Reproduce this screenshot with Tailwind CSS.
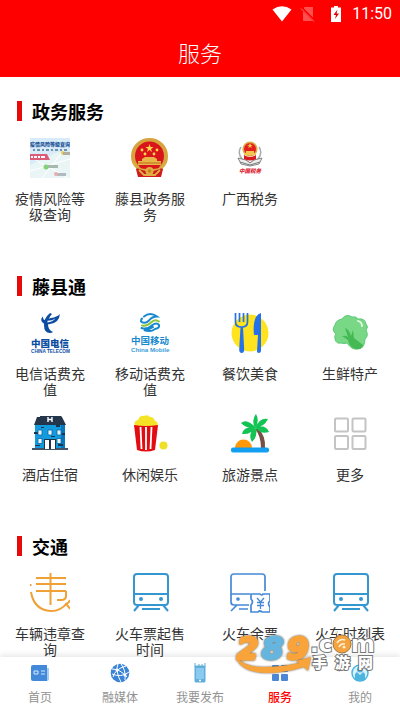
<!DOCTYPE html>
<html lang="zh-CN">
<head>
    <meta charset="UTF-8">
    <meta name="viewport" content="width=device-width, initial-scale=1.0">
    <title>服务</title>
    <script src="https://cdn.jsdelivr.net/npm/@tailwindcss/browser@4"></script>
</head>
<body class="bg-white font-['Noto_Sans_CJK_SC',sans-serif]">
<div class="relative flex flex-col h-screen">
    <!-- Header -->
    <header class="bg-[#fe0000] text-white">
        <div class="flex items-center justify-end h-7 pr-2 gap-2">
            <svg class="w-5 h-4" viewBox="0 0 20 16" fill="#fff"><path d="M.5 3.5Q10-3 19.500 3.500L10 15.500z"/></svg>
            <svg class="w-4 h-4" viewBox="0 0 16 16"><path d="M4.500 1H13v14H3V5z" fill="#ff5050"/><path d="M1 1.500L15 15.500" stroke="#fe0000" stroke-width="2.500"/><path d="M1 2.500L14 15.500" stroke="#ff6a6a"/></svg>
            <svg class="w-4 h-4 ml-1" viewBox="0 0 16 16"><path d="M4 1.500h2V0h4v1.500h3V16H3V1.500z" fill="#fff"/><path d="M9.500 3.500L5.500 9H8l-1 4 4-5.500H8.500z" fill="#d00"/></svg>
            <span class="font-[Roboto,sans-serif] text-base leading-7">11:50</span>
        </div>
        <h1 class="text-center text-[22px] leading-[49px] font-light">服务</h1>
    </header>

    <!-- Services -->
    <main class="flex-1 min-h-0 overflow-y-auto [scrollbar-width:none] text-sm leading-4 text-[#333] text-center pt-6">
        <section class="mb-[54px]">
            <h2 class="flex items-center gap-[10px] h-5 pl-[17px] mb-[17px] text-lg leading-5 font-bold text-black"><span class="w-[5px] h-5 bg-[#e60a0a]"></span>政务服务</h2>
            <div class="grid grid-cols-4">
                <a href="#" class="flex flex-col items-center gap-3 px-3">
                    <svg class="w-10 h-10" viewBox="0 0 40 40">
                        <path d="M0 0h40v40H0z" fill="#d7ebf8"/>
                        <path d="M0 27L28 14 40 16V40H0z" fill="#eaf5f5"/>
                        <path d="M0 33L40 21M12 40L34 12M2 20L38 40" stroke="#fff"/>
                        <text x="0" y="8" font-size="5" font-weight="900" fill="#1f5697">疫情风险等级查询</text>
                        <path d="M3 12h2M7 12h3M12 12h2M16 12h3M21 12h2M25 12h3M30 12h2M34 12h3" stroke="#6f93ad" stroke-width="2"/>
                        <path d="M0 16h17l3 6H0z" fill="#dc5b77"/>
                        <path d="M1 19h2M4 19h3M8 19h2M11 19h4" stroke="#fff" stroke-width="2"/>
                        <circle cx="33" cy="15" r="2" fill="#eed44c"/><path d="M33 14h7v3h-7z" fill="#b1ae9d"/>
                        <circle cx="16" cy="29" r="2.500" fill="#83d27b"/><path d="M18 27h10v3H18z" fill="#a5b9ac"/>
                        <circle cx="26" cy="36" r="2" fill="#f3a8a9"/><path d="M27 35h9v3h-9z" fill="#b2bac1"/>
                    </svg>
                    <span>疫情风险等级查询</span>
                </a>
                <a href="#" class="flex flex-col items-center gap-3 px-3">
                    <svg class="w-10 h-10" viewBox="0 0 40 40">
                        <path d="M6 30Q1 26 1 18a18.500 18 0 0 1 37 0q0 8-5 12l-2 8H8z" fill="#d6a43c"/>
                        <path d="M6 31l7-3h13l7 3-2 8H8z" fill="#cf1b1d"/>
                        <circle cx="19.500" cy="18" r="14.500" fill="#d9151b"/>
                        <path d="M19.500 6l1 3h3l-2.500 2 1 3-2.500-2-2.500 2 1-3-2.500-2h3z" fill="#ffd94c"/>
                        <g fill="#ffd94c"><circle cx="12" cy="12" r="1.400"/><circle cx="27" cy="12" r="1.400"/><circle cx="15" cy="16" r="1.400"/><circle cx="24" cy="16" r="1.400"/></g>
                        <path d="M12 21l3-2h9l3 2v2h4v4H8v-4h4z" fill="#e9b546"/>
                        <path d="M8 25h23" stroke="#bb6a20"/>
                        <path d="M3 24Q6 31 16 32h7q10-1 13-8M9 32l5 5h11l5-5" fill="none" stroke="#dfad43" stroke-width="1.800"/>
                        <circle cx="19.500" cy="33" r="4" fill="#e2ad42"/><circle cx="19.500" cy="33" r="1.800" fill="#c98020"/>
                    </svg>
                    <span>藤县政务服务</span>
                </a>
                <a href="#" class="flex flex-col items-center gap-3 px-3">
                    <svg class="w-10 h-10" viewBox="0 0 40 40">
                        <path d="M11 9Q7 15 12 21l8 4 8-4q5-6 1-12" fill="none" stroke="#aaa" stroke-width="1.500"/>
                        <path d="M8 20l8 2 4 3 4-3 8-2-3 6-9 2-9-2z" fill="#eee" stroke="#777" stroke-width=".9"/>
                        <path d="M10 24l10 3 10-3" fill="none" stroke="#777"/>
                        <circle cx="20" cy="11" r="7.600" fill="#d9ad47"/><circle cx="20" cy="11" r="6" fill="#e41d1d"/>
                        <path d="M20 5l1 2h2l-2 1 1 2-2-1-2 1 1-2-2-1h2zM16 13h8v2h2v2H14v-2h2z" fill="#f1c751"/>
                        <path d="M14 17q6 4 12 0v4q-6 3-12 0z" fill="#d71920"/>
                        <text x="9" y="35" font-size="5.500" font-weight="900" font-style="italic" fill="#dd2836">中国税务</text>
                    </svg>
                    <span>广西税务</span>
                </a>
            </div>
        </section>

        <section class="mb-[54px]">
            <h2 class="flex items-center gap-[10px] h-5 pl-[17px] mb-[17px] text-lg leading-5 font-bold text-black"><span class="w-[5px] h-5 bg-[#e60a0a]"></span>藤县通</h2>
            <div class="grid grid-cols-4 gap-y-[17px]">
                <a href="#" class="flex flex-col items-center gap-3 px-3">
                    <svg class="w-10 h-10 overflow-visible" viewBox="0 0 40 40" fill="#0c4da2">
                        <path d="M13 3.500Q10 6 12 9q2 3 8 2 9-1 10-10-3 3-9 4-4 1-6 2-2 0-2-3.500z"/>
                        <path d="M20 0q-6 5-6 12 0 8 6 8 2 0 3-1-5-2-5-8 0-6 4-10z"/>
                        <path d="M17.500 7.800q5 0 8-2.300-3 3.500-8 4z" fill="#fff"/>
                        <text x="1" y="34" font-size="9.500" font-weight="900">中国电信</text>
                        <text x="1" y="40" font-family="Liberation Sans, sans-serif" font-size="4.700" font-weight="bold">CHINA TELECOM</text>
                    </svg>
                    <span>电信话费充值</span>
                </a>
                <a href="#" class="flex flex-col items-center gap-3 px-3">
                    <svg class="w-10 h-10 overflow-visible" viewBox="0 0 40 40">
                        <g fill="none" stroke-width="2" stroke-linecap="round">
                            <path d="M14 3.500q6-5 13 0-5 0-8 4-4 4-8 1 0-2 1-3" stroke="#1788ce"/>
                            <path d="M12 12.500q5 1 9-3 4-4 8-1" stroke="#8cc43d"/>
                            <path d="M11.500 15q6 2 11-3 4-3 6.500 0 1 3-4 4-3 2-5 2-4 0-6-1 5 0 9-3" stroke="#1788ce"/>
                        </g>
                        <text x="1" y="31" font-size="9.500" font-weight="bold" fill="#1788ce">中国移动</text>
                        <text x="1" y="38.500" font-family="Liberation Sans, sans-serif" font-size="6.200" font-weight="bold" fill="#3b9dd7">China Mobile</text>
                    </svg>
                    <span>移动话费充值</span>
                </a>
                <a href="#" class="flex flex-col items-center gap-3 px-3">
                    <svg class="w-10 h-10" viewBox="0 0 40 40">
                        <circle cx="20" cy="20" r="18.500" fill="#ffe31f"/>
                        <path d="M5.500 0v9q0 5 6 5t6-5V0M9.500 0v9M13.500 0v9" fill="none" stroke="#2471e9" stroke-width="1.700"/>
                        <path d="M10.500 14h2.500l1.200 23q-.2 3-2.500 3t-2.500-3z" fill="#2471e9"/>
                        <path d="M31 0v38q-.3 2-2.200 2T27 38l1-16h-4Q22 3 31 0z" fill="#2471e9"/>
                    </svg>
                    <span>餐饮美食</span>
                </a>
                <a href="#" class="flex flex-col items-center gap-3 px-3">
                    <svg class="w-10 h-10" viewBox="0 0 40 40">
                        <path d="M12 6q4-6 10-2 4-1 6 2 7-1 8 5 3 3 0 6 3 6-1 9 0 10-8 10-5 1-10-6-3 1-6 0-5 1-6-4-1-3 1-5-5-4-1-9 1-5 7-6z" fill="#78d886" stroke="#5fc978"/>
                        <path d="M26 36q-7-2-8-9l-6-4q4-1 6 1l-3-9q4 1 6 8l2-6 1 8 9 7q-1 5-7 4z" fill="#45b954"/>
                        <path d="M28 8q4 1 4 5" fill="none" stroke="#e8fbe9" stroke-width="1.800" stroke-linecap="round"/>
                    </svg>
                    <span>生鲜特产</span>
                </a>
                <a href="#" class="flex flex-col items-center gap-3 px-3">
                    <svg class="w-10 h-10" viewBox="0 0 40 40">
                        <path d="M5 10h30v25H5z" fill="#139be0"/><path d="M31 11h4v24h-4z" fill="#0876bd"/>
                        <path d="M7 3h3V2h21l1 1 4 8H4z" fill="#24364b"/><path d="M2 34h36v2H2z" fill="#435566"/>
                        <path d="M18 3v5M22 3v5M18 5.500h4" stroke="#fff" stroke-width="1.400"/>
                        <path d="M4 18h4v2H4zM26 11h4v2h-4zM11 13h3v1h-3zM21 22h4v1h-4zM32 19h3v2h-3zM28 30h5v2h-5zM5 31h5v1H5z" fill="#163650"/>
                        <g fill="#e6f7ff" stroke="#1266a0" stroke-width=".8"><path d="M8 16h4v5H8zM18 16h4v5h-4zM27 16h4v5h-4zM8 24.500h4v5H8zM27 24.500h4v5h-4z"/></g>
                        <path d="M14 25h12v10H14z" fill="#1d3548"/><path d="M15 26h4v9h-4zM21 26h4v9h-4z" fill="#fff"/>
                    </svg>
                    <span>酒店住宿</span>
                </a>
                <a href="#" class="flex flex-col items-center gap-3 px-3">
                    <svg class="w-10 h-10" viewBox="0 0 40 40">
                        <path d="M5 12q-2-5 3-6 2-5 6-4 4-2 6 1 4 0 5 4 4 1 2 5z" fill="#f5e326"/>
                        <path d="M4 11q12 2 24 0l-3 25q-9 3-18 0z" fill="#e10d12"/>
                        <path d="M10.500 13l1 22M16 13v23M21.500 13l-1 22" stroke="#fff" stroke-width="1.800"/>
                        <circle cx="33.500" cy="31.500" r="4" fill="#f0df27"/>
                    </svg>
                    <span>休闲娱乐</span>
                </a>
                <a href="#" class="flex flex-col items-center gap-3 px-3">
                    <svg class="w-10 h-10" viewBox="0 0 40 40">
                        <path d="M25 15l3-1q8 8 7 20h-4q0-12-6-19z" fill="#765045"/>
                        <path d="M5 34a8.500 8.500 0 0 1 17 0z" fill="#ff9909"/>
                        <rect x="1" y="33.500" width="38" height="5" rx="2" fill="#139ff1"/>
                        <path d="M25 14Q21 6 26 0q4 7-1 14zM25 14q5-11 13-9-4 8-13 9zM25 13q11-3 14 5-8 3-14-5zM26 14Q17 4 11 9q5 6 15 5zM26 13Q13 12 12 20q9 1 14-7zM26 13q-9 6-4 15 6-5 4-15z" fill="#13c354"/>
                    </svg>
                    <span>旅游景点</span>
                </a>
                <a href="#" class="flex flex-col items-center gap-3 px-3">
                    <svg class="w-10 h-10" viewBox="0 0 40 40" fill="none" stroke="#c4c4c4" stroke-width="2"><rect x="5" y="4.500" width="13" height="13" rx="1"/><rect x="22.500" y="4.500" width="13" height="13" rx="1"/><rect x="5" y="22" width="13" height="13" rx="1"/><rect x="22.500" y="22" width="13" height="13" rx="1"/></svg>
                    <span>更多</span>
                </a>
            </div>
        </section>

        <section>
            <h2 class="flex items-center gap-[10px] h-5 pl-[17px] mb-[17px] text-lg leading-5 font-bold text-black"><span class="w-[5px] h-5 bg-[#e60a0a]"></span>交通</h2>
            <div class="grid grid-cols-4">
                <a href="#" class="flex flex-col items-center gap-3 px-3">
                    <svg class="w-10 h-10" viewBox="0 0 40 40" fill="none" stroke="#efa036" stroke-width="2">
                        <path d="M6 5h30M6 11h30M6 18h30M20.500 0v32M36 18v5q0 4-5 4h-4"/><path d="M.5 11v2M1 19q3 18 20 19 10 0 16-8M35 31q2 0 5 5M36 31q3-1 4-4"/>
                    </svg>
                    <span>车辆违章查询</span>
                </a>
                <a href="#" class="flex flex-col items-center gap-3 px-3">
                    <svg class="w-10 h-10" viewBox="0 0 40 40" fill="none" stroke="#3597cf" stroke-width="2">
                        <rect x="4" y="1" width="34" height="31" rx="3"/><path d="M4 21h34M9 32l-5 6M33 32l5 6M12 36h18"/><circle cx="11" cy="26" r="1" /><circle cx="31" cy="26" r="1"/>
                    </svg>
                    <span>火车票起售时间</span>
                </a>
                <a href="#" class="flex flex-col items-center gap-3 px-3">
                    <svg class="w-10 h-10" viewBox="0 0 40 40" fill="none" stroke="#4589d8" stroke-width="1.700">
                        <path d="M35 18V4q0-3-3-3H4Q1 1 1 4v25q0 3 3 3h15M1 21h19M7 32l-6 6M9 36h9"/><circle cx="8" cy="26" r="1"/>
                        <path d="M40 21h-7q-1 2-3 0h-9v5q3 3 0 6v7h7q2-2 4 0h8v-5q-3-4 0-6z"/><path d="M27 25l3.500 4 3.500-4M27 29.500h7M27 32.500h7M30.500 29v7" stroke-width="1.300"/>
                    </svg>
                    <span>火车余票</span>
                </a>
                <a href="#" class="flex flex-col items-center gap-3 px-3">
                    <svg class="w-10 h-10" viewBox="0 0 40 40" fill="none" stroke="#3597cf" stroke-width="2">
                        <rect x="4" y="1" width="34" height="31" rx="3"/><path d="M4 21h34M9 32l-5 6M33 32l5 6M12 36h18"/><circle cx="11" cy="26" r="1"/><circle cx="31" cy="26" r="1"/>
                    </svg>
                    <span>火车时刻表</span>
                </a>
            </div>
        </section>
    </main>

    <!-- Tab bar -->
    <nav class="grid grid-cols-5 h-[54px] pt-[6px] bg-white text-xs leading-4 text-[#929292] shadow-[0_-2px_6px_rgba(0,0,0,0.1)]">
        <a href="#" class="flex flex-col items-center gap-[6px]">
            <svg class="w-5 h-5" viewBox="0 0 20 20"><path d="M16 5h3v11q0 2-3 2z" fill="#a6cdf5"/><path d="M1 4q0-2 2-2h14v16H3q-2 0-2-2z" fill="#4289da"/><path d="M4 8h4v3H4zM11 8h4M11 11h4" fill="none" stroke="#d3e8ff"/></svg>
            <span>首页</span>
        </a>
        <a href="#" class="flex flex-col items-center gap-[6px]">
            <svg class="w-5 h-5" viewBox="0 0 20 20"><circle cx="10" cy="10" r="9.300" fill="#3984d5"/><path d="M2 6q8 0 15 8M3 14Q5 6 16 3M8 1Q5 8 11 19M2 11q9 4 17-2M11 1q5 6 4 16" fill="none" stroke="#fff"/><g fill="#fff"><circle cx="7" cy="7" r="1.500"/><circle cx="15" cy="12" r="1.500"/></g></svg>
            <span>融媒体</span>
        </a>
        <a href="#" class="flex flex-col items-center gap-[6px]">
            <svg class="w-5 h-5" viewBox="0 0 20 20"><rect x="4.500" y="2.500" width="11" height="17" rx="1.500" fill="#62aeda"/><path d="M6 5h8v11H6z" fill="#8bcaf0"/><path d="M5 0v4M9 1v2M12 1v2M15 0v4" stroke="#65abd3"/><circle cx="10" cy="17.500" r="1" fill="#fff"/></svg>
            <span>我要发布</span>
        </a>
        <a href="#" class="flex flex-col items-center gap-[6px] text-[#f00] font-medium">
            <svg class="w-5 h-5" viewBox="0 0 20 20" fill="#4b87d4"><rect x="2" y="2" width="7" height="7" rx="1"/><rect x="11" y="2" width="7" height="7" rx="1"/><rect x="2" y="11" width="7" height="7" rx="1"/><rect x="11" y="11" width="7" height="7" rx="1"/></svg>
            <span>服务</span>
        </a>
        <a href="#" class="flex flex-col items-center gap-[6px]">
            <svg class="w-5 h-5" viewBox="0 0 20 20"><circle cx="10" cy="10" r="8" fill="#d8f1fc" stroke="#4bb4df" stroke-width="1.500"/><path d="M5 16v-5l2-2 3 3 3-3 2 2v5q-5 4-10 0z" fill="#4bb4df"/><circle cx="10" cy="6.500" r="3" fill="#4bb4df"/></svg>
            <span>我的</span>
        </a>
    </nav>

    <!-- Site mark, floats over the tab bar -->
    <svg class="absolute right-6 bottom-9 w-[142px] h-[42px] overflow-visible" viewBox="0 0 142 42">
        <g class="drop-shadow-[0_0_1px_#6b5a40]" font-family="DejaVu Sans, sans-serif" font-weight="bold" stroke-linejoin="round">
            <path d="M2 24Q10 34 30 34q18 0 35-4l-3-2 15-4-3 14-4-4Q50 40 32 40 6 39 2 24z" fill="#f9a33b"/>
            <g font-size="31" font-style="italic" stroke-width="3">
                <text x="3" y="26" fill="#f9a33b" stroke="#f9a33b">2</text>
                <text x="28" y="26" fill="#66b5df" stroke="#66b5df">8</text>
                <text x="53" y="26" fill="#f9a33b" stroke="#f9a33b">9</text>
            </g>
        </g>
        <g font-family="DejaVu Sans, sans-serif" font-weight="bold" font-size="23" fill="#fff" stroke="#777" stroke-width="2" paint-order="stroke"><text x="76" y="19">.c</text><text x="117" y="19">m</text></g>
        <circle cx="108" cy="11" r="9" fill="#f5a33e" stroke="#a4783e"/>
        <path d="M103 10q3-5 8-3M105 14q2-4 6-3M104 2l-2-4" fill="none" stroke="#fff2d9" stroke-width="1.500"/><circle cx="110" cy="14" r="1.500" fill="#fff2d9"/>
        <g font-size="15" font-weight="900" fill="#fff" stroke="#777" stroke-width="2" paint-order="stroke"><text x="78" y="35">手</text><text x="101" y="35">游</text><text x="124" y="35">网</text></g>
    </svg>
</div>
</body>
</html>
